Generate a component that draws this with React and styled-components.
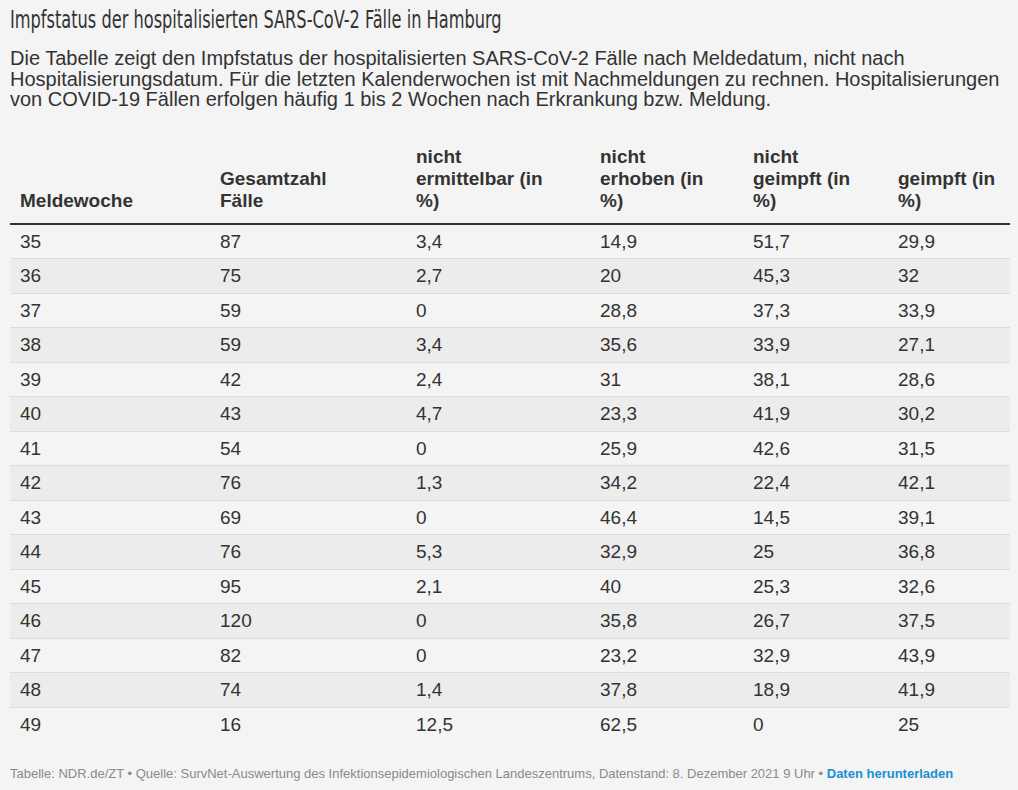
import React from "react";
import styled, { createGlobalStyle } from "styled-components";

const GlobalStyle = createGlobalStyle`
  html, body {
    margin: 0;
    padding: 0;
    background: #f4f4f4;
  }
  body {
    font-family: "Liberation Sans", Arial, sans-serif;
    color: #333;
  }
`;

const Wrapper = styled.div`
  padding: 6px 8px 0 10px;
  width: 1000px;
`;

const Title = styled.h2`
  margin: 0;
  font-family: "DejaVu Sans Condensed", "DejaVu Sans", sans-serif;
  font-weight: normal;
  font-size: 24px;
  line-height: 28px;
  color: #333;
  white-space: nowrap;
  transform: scaleX(0.75);
  transform-origin: left center;
`;

const Intro = styled.p`
  margin: 14px 0 0;
  font-size: 20px;
  line-height: 20.5px;
  color: #333;
`;

const Table = styled.table`
  margin-top: 36px;
  width: 1000px;
  border-collapse: collapse;
  table-layout: fixed;
`;

const HeadCell = styled.th`
  box-sizing: border-box;
  text-align: left;
  vertical-align: bottom;
  font-size: 19px;
  font-weight: bold;
  line-height: 22px;
  padding: 0 10px 11px;
  border-bottom: 2px solid #333;
  width: ${(p) => p.$w}px;
`;

const Row = styled.tr`
  background: ${(p) => (p.$striped ? "#ececec" : "transparent")};
  border-bottom: 1px solid ${(p) => (p.$last ? "transparent" : "#dcdcdc")};
`;

const Cell = styled.td`
  font-size: 19px;
  line-height: 20.5px;
  padding: 7px 10px 6px;
`;

const Footer = styled.div`
  margin-top: 24px;
  font-size: 13px;
  line-height: 16px;
  color: #8a8a8a;
`;

const Link = styled.a`
  color: #1a8fd0;
  font-weight: bold;
  text-decoration: none;
`;

const columns = [
  { lines: ["Meldewoche"], w: 200 },
  { lines: ["Gesamtzahl", "Fälle"], w: 196 },
  { lines: ["nicht", "ermittelbar (in", "%)"], w: 184 },
  { lines: ["nicht", "erhoben (in", "%)"], w: 153 },
  { lines: ["nicht", "geimpft (in", "%)"], w: 145 },
  { lines: ["geimpft (in", "%)"], w: 122 },
];

const rows = [
  ["35", "87", "3,4", "14,9", "51,7", "29,9"],
  ["36", "75", "2,7", "20", "45,3", "32"],
  ["37", "59", "0", "28,8", "37,3", "33,9"],
  ["38", "59", "3,4", "35,6", "33,9", "27,1"],
  ["39", "42", "2,4", "31", "38,1", "28,6"],
  ["40", "43", "4,7", "23,3", "41,9", "30,2"],
  ["41", "54", "0", "25,9", "42,6", "31,5"],
  ["42", "76", "1,3", "34,2", "22,4", "42,1"],
  ["43", "69", "0", "46,4", "14,5", "39,1"],
  ["44", "76", "5,3", "32,9", "25", "36,8"],
  ["45", "95", "2,1", "40", "25,3", "32,6"],
  ["46", "120", "0", "35,8", "26,7", "37,5"],
  ["47", "82", "0", "23,2", "32,9", "43,9"],
  ["48", "74", "1,4", "37,8", "18,9", "41,9"],
  ["49", "16", "12,5", "62,5", "0", "25"],
];

export default function App() {
  return (
    <>
      <GlobalStyle />
      <Wrapper>
        <Title>Impfstatus der hospitalisierten SARS-CoV-2 Fälle in Hamburg</Title>
        <Intro>
          Die Tabelle zeigt den Impfstatus der hospitalisierten SARS-CoV-2 Fälle nach
          Meldedatum, nicht nach Hospitalisierungsdatum. Für die letzten Kalenderwochen
          ist mit Nachmeldungen zu rechnen. Hospitalisierungen von COVID-19 Fällen
          erfolgen häufig 1 bis 2 Wochen nach Erkrankung bzw. Meldung.
        </Intro>
        <Table>
          <thead>
            <tr>
              {columns.map((c) => (
                <HeadCell key={c.lines.join(" ")} $w={c.w}>
                  {c.lines.map((l, k) => (
                    <React.Fragment key={k}>
                      {k > 0 && <br />}
                      {l}
                    </React.Fragment>
                  ))}
                </HeadCell>
              ))}
            </tr>
          </thead>
          <tbody>
            {rows.map((r, i) => (
              <Row key={r[0]} $striped={i % 2 === 1} $last={i === rows.length - 1}>
                {r.map((v, j) => (
                  <Cell key={j}>{v}</Cell>
                ))}
              </Row>
            ))}
          </tbody>
        </Table>
        <Footer>
          Tabelle: NDR.de/ZT • Quelle: SurvNet-Auswertung des Infektionsepidemiologischen
          Landeszentrums, Datenstand: 8. Dezember 2021 9 Uhr •{" "}
          <Link href="#">Daten herunterladen</Link>
        </Footer>
      </Wrapper>
    </>
  );
}
